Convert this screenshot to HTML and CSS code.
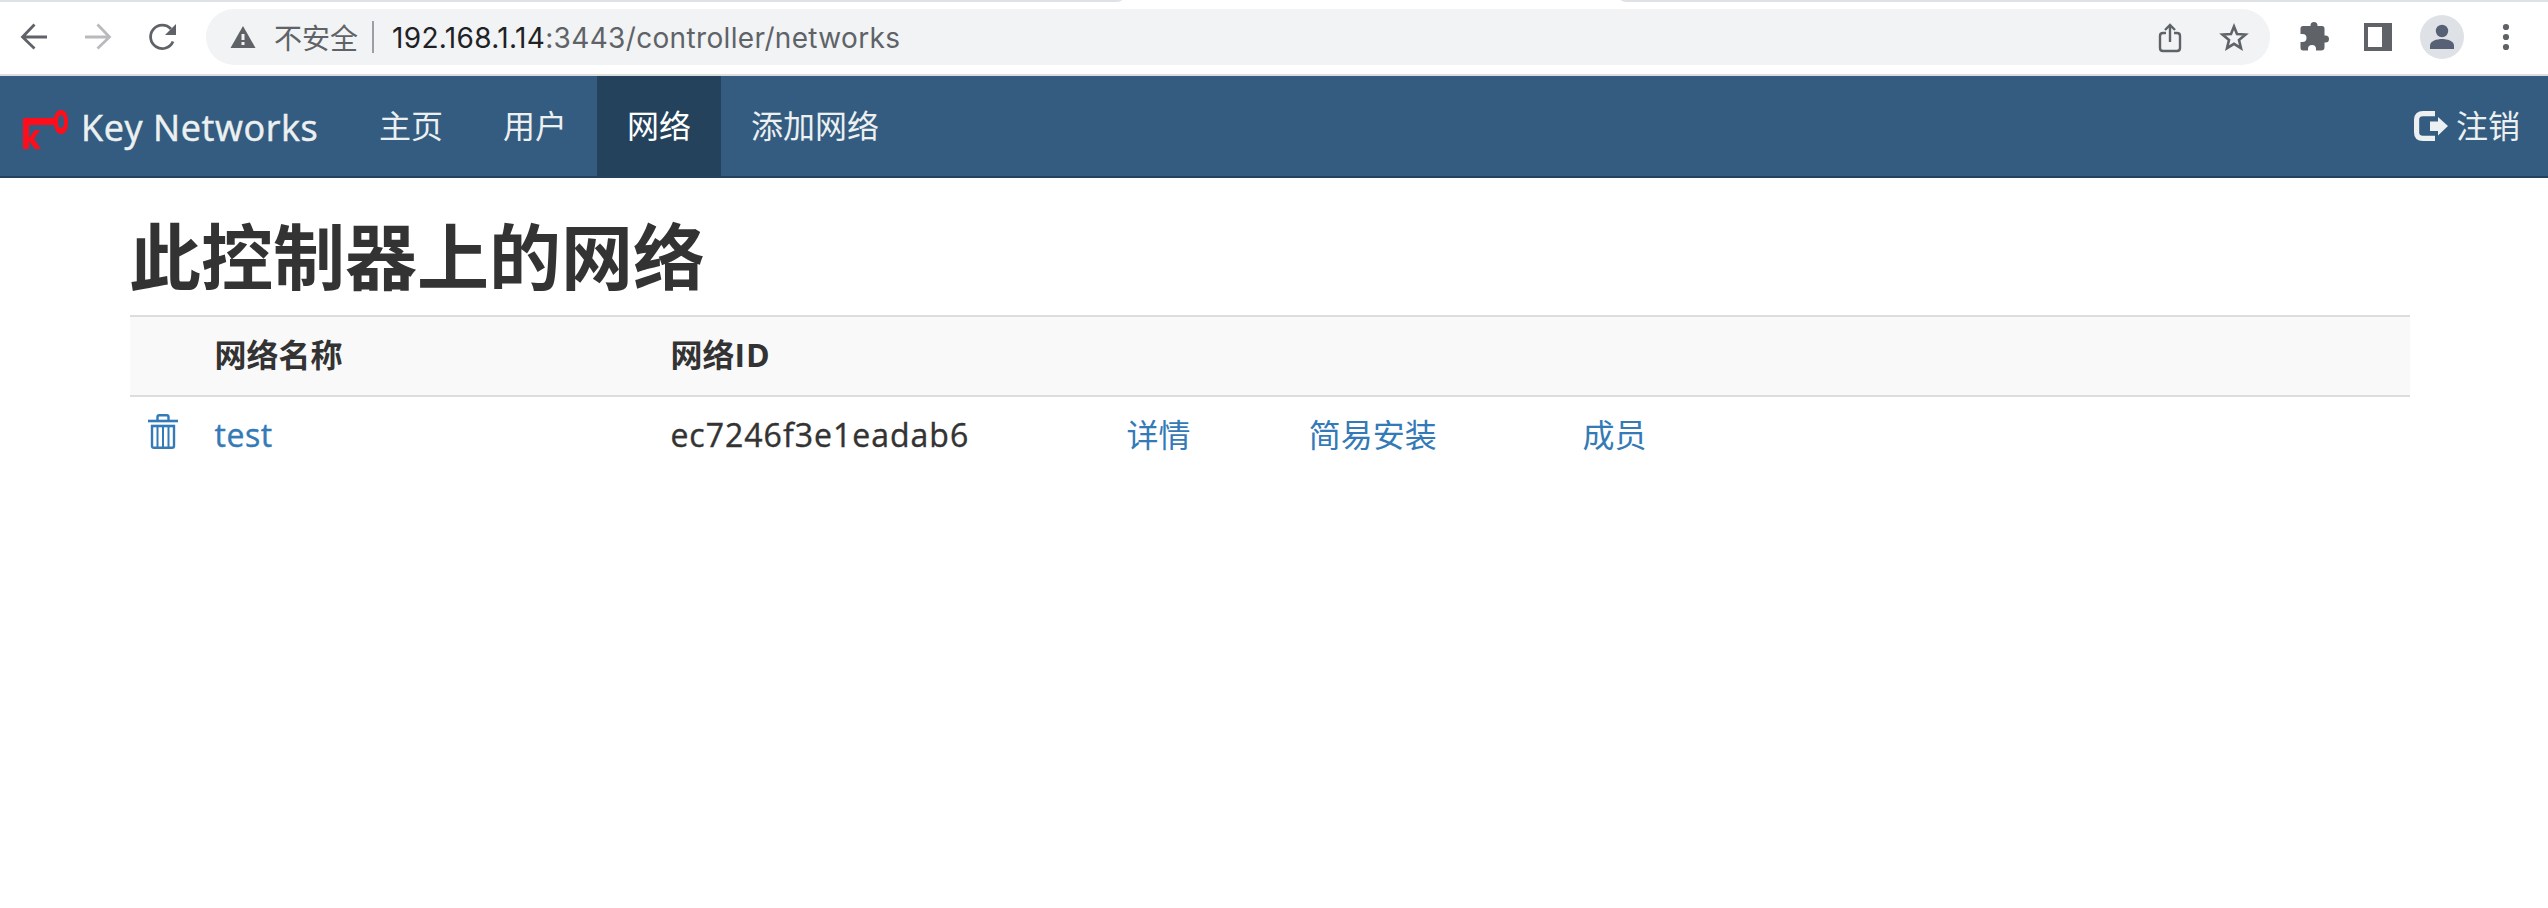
FILE: index.html
```html
<!DOCTYPE html>
<html lang="zh-CN">
<head>
<meta charset="utf-8">
<title>Key Networks</title>
<link rel="stylesheet" href="styles.css">
</head>
<body>
<div class="tabstrip"><span class="tab-edge tab-edge-left"></span><span class="tab-edge tab-edge-right"></span></div>
<div class="toolbar">
  <svg class="tool" viewBox="0 0 64 56"><path d="M45 28H21M32.500 15.500L20.500 28L32.500 39.500" fill="none" stroke="#5f6368" stroke-width="2.800"/></svg>
  <svg class="tool" viewBox="0 0 64 56"><path d="M19 28H43M31.500 15.500L43.500 28L31.500 39.500" fill="none" stroke="#bababc" stroke-width="2.800"/></svg>
  <svg class="tool" viewBox="0 0 64 56"><path d="M41 20A11.700 11.700 0 1 0 43 32.500" fill="none" stroke="#5f6368" stroke-width="2.800"/><path d="M46 15V26H35Z" fill="#5f6368"/></svg>
  <div class="omnibox">
    <svg class="warning" viewBox="0 0 26 24"><path d="M13 1L25.500 23H.5Z" fill="#5f6368"/><path d="M11.500 9h3v6h-3zM11.500 17h3v3h-3z" fill="#f1f3f4"/></svg>
    <span class="insecure">不安全</span>
    <span class="divider"></span>
    <span class="url"><span class="host">192.168.1.14</span>:3443/controller/networks</span>
    <svg class="tool share" viewBox="0 0 64 56"><path d="M28 24H25Q22 24 22 27V39Q22 42 25 42H39Q42 42 42 39V27Q42 24 39 24H36M32 33V16.500M27 21L32 16L37 21" fill="none" stroke="#5f6368" stroke-width="2.400"/></svg>
    <svg class="tool" viewBox="0 0 64 56"><path d="M32 17.500L35 25L43.500 25.500L37 31L39 39.200L32 34.800L25 39.200L27 31L20.500 25.500L29 25Z" fill="none" stroke="#5f6368" stroke-width="2.600"/></svg>
  </div>
  <svg class="tool" viewBox="0 0 64 56"><path d="M40.500 26.500H42.500V19.500Q42.500 17 40 17H35.500V16.500A3.500 3.500 0 0 0 28.500 16.500V17H21Q18.500 17 18.500 19.500V25H20.500A3.800 3.800 0 0 1 20.500 33H18.500V38.800Q18.500 41.500 21 41.500H26V40A4 4 0 0 1 34 40V41.500H39Q42.500 41.500 42.500 38.500V33.500H43.500A3.500 3.500 0 0 0 43.500 26.500Z" fill="#5f6368"/></svg>
  <svg class="tool" viewBox="0 0 64 56"><path fill-rule="evenodd" d="M18 14H46V42H18ZM22 18V38H36V18Z" fill="#5f6368"/></svg>
  <svg class="tool" viewBox="0 0 64 56"><circle cx="32" cy="28" r="22" fill="#dee1e6"/><circle cx="32" cy="22" r="6.200" fill="#576075"/><path d="M20 40V36.500C20 32 27 30 32 30S44 32 44 36.500V40Z" fill="#576075"/></svg>
  <svg class="tool" viewBox="0 0 64 56"><g fill="#5f6368"><circle cx="32" cy="18" r="3.100"/><circle cx="32" cy="28" r="3.100"/><circle cx="32" cy="38" r="3.100"/></g></svg>
</div>
<nav class="navbar">
  <a class="brand">
    <svg class="logo" viewBox="0 0 46 40"><path fill-rule="evenodd" d="M0 8H31C32 3 34 0 38 0C43 0 45 5 45 12S43 24 38 24C34 24 32 20 31 15H6V28L12 20H17L11 29L18 39H12L6 31V39H0ZM38 5C36 5 35 8 35 12S36 18 38 18S41 16 41 12S40 5 38 5Z" fill="#ff0d1b"/></svg>
    <span class="brand-name">Key Networks</span>
  </a>
  <a class="item">主页</a><a class="item">用户</a><a class="item active">网络</a><a class="item">添加网络</a>
  <a class="logout">
    <svg class="logout-icon" viewBox="0 0 34 30"><path d="M21 2.600H9Q2.600 2.600 2.600 8.500V21.500Q2.600 27.400 9 27.400H21" fill="none" stroke="#ecf0f1" stroke-width="5.200"/><path d="M16 10.500H24V6L34 15L24 24.500V20H16Z" fill="#ecf0f1"/></svg>
    <span>注销</span>
  </a>
</nav>
<main class="container">
  <h1>此控制器上的网络</h1>
  <table class="networks">
    <colgroup><col class="c-del"><col class="c-wide"><col class="c-wide"><col class="c-detail"><col class="c-easy"><col></colgroup>
    <tr class="head"><th></th><th>网络名称</th><th>网络<span class="latin">ID</span></th><th></th><th></th><th></th></tr>
    <tr>
      <td><a><svg class="trash" viewBox="0 0 30 35"><g fill="none" stroke="#337ab7"><path d="M0 7H30" stroke-width="2.600"/><path d="M9.500 6V3Q9.500 1.300 11.200 1.300H18.800Q20.500 1.300 20.500 3V6" stroke-width="2.400"/><path d="M4 11V32Q4 33.800 6 33.800H24Q26 33.800 26 32V11" stroke-width="2.400"/><path d="M3 12H27" stroke-width="2.600"/><path d="M9.500 12V33M15 12V33M20.500 12V33" stroke-width="2"/></g></svg></a></td>
      <td><a class="name">test</a></td>
      <td class="netid">ec7246f3e1eadab6</td>
      <td><a>详情</a></td><td><a>简易安装</a></td><td><a>成员</a></td>
    </tr>
  </table>
</main>
</body>
</html>
```
FILE: styles.css
```css
* { box-sizing: border-box; }
body { margin: 0; background: #fff; color: #333; font: 32px/46px "Open Sans", "Noto Sans CJK SC", sans-serif; }
svg { display: block; flex: none; }
.tabstrip { height: 2px; display: flex; justify-content: space-between; }
.tab-edge { height: 2px; background: #dee1e6; }
.tab-edge-left { width: 1122px; border-bottom-right-radius: 8px 2px; }
.tab-edge-right { width: 927px; border-bottom-left-radius: 8px 2px; }
.toolbar { display: flex; align-items: center; height: 74px; padding: 0 10px 2px 2px; border-bottom: 2px solid #dadedd; }
.tool { width: 64px; height: 56px; }
.omnibox { flex: 1; display: flex; align-items: center; height: 56px; margin: 0 12px; padding: 0 4px 0 24px; border-radius: 28px; background: #f1f3f4; color: #5f6368; font: 28px/40px Inter, "Noto Sans CJK SC", sans-serif; }
.warning { width: 26px; height: 24px; }
.insecure { margin-left: 18px; font-family: "Noto Sans CJK SC", sans-serif; }
.divider { width: 2px; height: 32px; margin: 0 18px 0 14px; background: #9aa0a6; }
.url { padding-top: 1px; letter-spacing: .34px; white-space: nowrap; }
.host { color: #202124; }
.share { margin-left: auto; }
.navbar { display: flex; height: 102px; background: #345c80; border-bottom: 2px solid #24425c; color: #ecf0f1; line-height: 100px; }
.brand { display: flex; align-items: center; width: 349px; padding-left: 23px; }
.logo { width: 46px; height: 40px; margin-top: 8px; }
.brand-name { margin-left: 12px; padding-top: 3px; font-size: 36px; letter-spacing: .6px; -webkit-text-stroke: .5px currentColor; white-space: nowrap; }
.item { padding: 0 30px; }
.active { background: #24425c; color: #fff; }
.logout { display: flex; align-items: center; margin-left: auto; padding-right: 28px; }
.logout-icon { width: 34px; height: 30px; margin-right: 8px; }
.container { padding: 38px 138px 0 130px; }
h1 { margin: 0 0 0 -1px; font-size: 72px; line-height: 80px; font-weight: 700; }
.networks { width: 100%; margin-top: 19px; table-layout: fixed; border-collapse: separate; border-spacing: 0; }
.c-del { width: 3%; }
.c-wide { width: 20%; }
.c-detail { width: 8%; }
.c-easy { width: 12%; }
th, td { height: 80px; padding: 15px 16px; text-align: left; vertical-align: top; }
.head th { height: 82px; background: #f9f9f9; border-top: 2px solid #ddd; border-bottom: 2px solid #ddd; }
a { color: inherit; text-decoration: none; }
td a { color: #337ab7; }
.latin { letter-spacing: 1px; }
.name { letter-spacing: .6px; }
.netid { letter-spacing: 1px; }
.name, .netid { -webkit-text-stroke: .4px currentColor; }
.trash { width: 30px; height: 35px; margin: 2px 0 0 2px; }
```
